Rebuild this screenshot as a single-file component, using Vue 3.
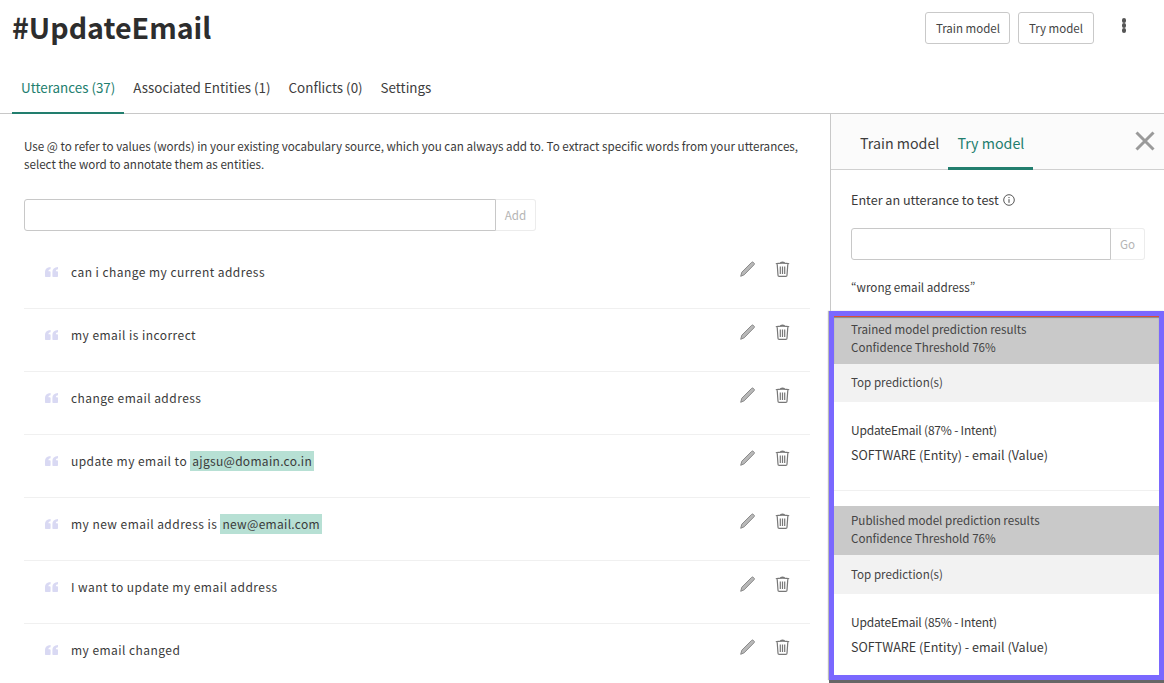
<script setup>
const tabs = [
  { label: 'Utterances (37)', active: true },
  { label: 'Associated Entities (1)' },
  { label: 'Conflicts (0)' },
  { label: 'Settings' }
]

const utterances = [
  { text: 'can i change my current address' },
  { text: 'my email is incorrect' },
  { text: 'change email address' },
  { text: 'update my email to ', entity: 'ajgsu@domain.co.in' },
  { text: 'my new email address is ', entity: 'new@email.com' },
  { text: 'I want to update my email address' },
  { text: 'my email changed' }
]

const results = [
  { title: 'Trained model prediction results', intent: 'UpdateEmail (87% - Intent)', trained: true },
  { title: 'Published model prediction results', intent: 'UpdateEmail (85% - Intent)' }
]
</script>

<template>
  <div class="page">
    <header class="top">
      <div class="title-row">
        <h1 class="title">#UpdateEmail</h1>
        <div class="actions">
          <button class="btn">Train model</button>
          <button class="btn">Try model</button>
          <span class="kebab"><i /><i /><i /></span>
        </div>
      </div>
      <nav class="tabs">
        <a v-for="t in tabs" :key="t.label" class="tab" :class="{ active: t.active }">{{ t.label }}</a>
      </nav>
    </header>

    <div class="body">
      <main class="left">
        <p class="help">
          Use @ to refer to values (words) in your existing vocabulary source, which you can always add to. To extract specific words from your utterances, select the word to annotate them as entities.
        </p>
        <div class="input-group add-group">
          <input class="field" type="text" />
          <span class="addon">Add</span>
        </div>
        <ul class="list">
          <li v-for="u in utterances" :key="u.text" class="row">
            <svg class="quote" viewBox="0 0 13 10" width="13" height="10">
              <path d="M0 9V5C0 2.200 1.800.4 5.600 0v2.300C4.200 2.500 3.500 3.100 3.400 4.200h1.200c.6 0 1 .4 1 1V9c0 .6-.4 1-1 1H1c-.6 0-1-.4-1-1zM7.400 9V5C7.400 2.200 9.200.4 13 0v2.300c-1.400.2-2.100.8-2.200 1.900H12c.6 0 1 .4 1 1V9c0 .6-.4 1-1 1H8.400c-.6 0-1-.4-1-1z" fill="#d9d9f3" />
            </svg>
            <span class="text">{{ u.text }}<span v-if="u.entity" class="entity">{{ u.entity }}</span></span>
            <svg class="pencil" viewBox="0 0 15 16" width="15" height="16">
              <path d="M.7 15.300l1.100-4.100 9.800-9.800c.6-.6 1.200-.6 1.800 0l.6.6c.6.6.6 1.200 0 1.800l-9.800 10z" fill="#b8b8b8" stroke="#808080" stroke-width=".9" stroke-linejoin="round" />
            </svg>
            <svg class="trash" viewBox="0 0 15 16" width="15" height="16">
              <path d="M.8 2.800C3 2 12 2 14.200 2.800M5.300 2.200C5.300.8 9.700.8 9.700 2.200M2.200 3.200l.8 11c0 .7.5 1.200 1.200 1.200h6.600c.7 0 1.200-.5 1.200-1.200l.8-11M5.300 5.500v7.500M7.500 5.500v7.500M9.700 5.500v7.500" fill="none" stroke="#777" stroke-width="1.200" />
            </svg>
          </li>
        </ul>
      </main>

      <aside class="panel">
        <div class="panel-tabs">
          <a class="panel-tab">Train model</a>
          <a class="panel-tab active">Try model</a>
          <svg class="close" viewBox="0 0 20 20" width="20" height="20">
            <path d="M1.500 1.500l17 17M18.500 1.500l-17 17" stroke="#9a9a9a" stroke-width="3" fill="none" />
          </svg>
        </div>
        <div class="test">
          <div class="test-label">
            Enter an utterance to test
            <svg viewBox="0 0 12 12" width="12" height="12">
              <circle cx="6" cy="6" r="5.300" fill="none" stroke="#444" stroke-width=".9" />
              <path d="M6 5.200v3.600M6 3v1.100" stroke="#444" stroke-width="1" fill="none" />
            </svg>
          </div>
          <div class="input-group go-group">
            <input class="field" type="text" />
            <span class="addon">Go</span>
          </div>
          <div class="said">“wrong email address”</div>
        </div>
        <div class="results">
          <section v-for="r in results" :key="r.title" class="result" :class="{ trained: r.trained }">
            <div class="result-head">
              <div>{{ r.title }}</div>
              <div>Confidence Threshold 76%</div>
            </div>
            <div class="result-sub">Top prediction(s)</div>
            <div class="result-body">
              <div class="intent-line">{{ r.intent }}</div>
              <div class="entity-line">SOFTWARE (Entity) - email (Value)</div>
            </div>
          </section>
        </div>
      </aside>
    </div>
  </div>
</template>

<style>
html, body {
  margin: 0;
  background: #fff;
}
</style>

<style scoped>
.page {
  width: 1164px;
  height: 683px;
  overflow: hidden;
  display: flex;
  flex-direction: column;
  font-family: "Noto Sans CJK SC", "Noto Sans", sans-serif;
  color: #3a3a3a;
  font-size: 13px;
  font-variant-east-asian: proportional-width;
}

.top {
  height: 114px;
  flex-shrink: 0;
  box-sizing: border-box;
  border-bottom: 1px solid #c8c8c8;
  display: flex;
  flex-direction: column;
  justify-content: space-between;
}
.title-row {
  display: flex;
  justify-content: space-between;
  padding: 10px 38px 0 12px;
}
.title {
  margin: 0;
  font-size: 28.600px;
  line-height: 34px;
  font-weight: 700;
  color: #2d2d2d;
}
.actions {
  display: flex;
  align-items: flex-start;
  gap: 8px;
  padding-top: 2px;
}
.btn {
  height: 32px;
  padding: 0 9.500px;
  font: inherit;
  font-size: 11.500px;
  color: #444;
  background: #fff;
  border: 1px solid #c9c9c9;
  border-radius: 3px;
}
.kebab {
  margin: 6px 0 0 20px;
  display: flex;
  flex-direction: column;
  gap: .5px;
}
.kebab i {
  width: 4.500px;
  height: 4.500px;
  border-radius: 50%;
  background: #555;
}

.tabs {
  display: flex;
  padding-left: 12px;
}
.tab {
  padding: 0 9px 14px;
  font-size: 13.400px;
  line-height: 22px;
  color: #3d3d3d;
  border-bottom: 2px solid transparent;
  margin-bottom: -1px;
}
.tab.active {
  color: #227e6e;
  border-bottom-color: #227e6e;
}

.body {
  flex: 1;
  display: flex;
  min-height: 0;
}

.left {
  width: 830px;
  flex-shrink: 0;
  box-sizing: border-box;
  padding: 23px 20px 0 24px;
}
.help {
  margin: 0 0 26px;
  font-size: 11.630px;
  line-height: 18px;
  color: #3a3a3a;
}
.input-group {
  display: flex;
  box-sizing: border-box;
  height: 32px;
}
.add-group {
  width: 512px;
}
.field {
  flex: 1;
  min-width: 0;
  box-sizing: border-box;
  border: 1px solid #c8c8c8;
  border-radius: 3px 0 0 3px;
  outline: none;
  background: #fff;
}
.addon {
  width: 40px;
  box-sizing: border-box;
  display: flex;
  align-items: center;
  justify-content: center;
  border: 1px solid #ececec;
  border-left: none;
  border-radius: 0 3px 3px 0;
  color: #b5b5b5;
  font-size: 11.600px;
}
.go-group .addon {
  width: 34px;
}

.list {
  list-style: none;
  margin: 15px 0 0;
  padding: 0;
}
.row {
  height: 63px;
  box-sizing: border-box;
  display: flex;
  align-items: center;
  padding: 0 20px 11px 21px;
  border-bottom: 1px solid #f0f0f0;
}
.quote {
  flex-shrink: 0;
  margin-right: 13px;
}
.text {
  flex: 1;
  font-size: 12px;
  letter-spacing: .45px;
  color: #3a3a3a;
}
.entity {
  display: inline-block;
  background: #b7e0d4;
  padding: 0 2px;
  line-height: 20px;
  letter-spacing: .3px;
}
.pencil {
  margin: -5px 20px 0 0;
}
.trash {
  margin-top: -5px;
}

.panel {
  flex: 1;
  min-width: 0;
  display: flex;
  flex-direction: column;
  border-left: 1px solid #c8c8c8;
  box-sizing: border-box;
}
.panel-tabs {
  height: 56px;
  flex-shrink: 0;
  box-sizing: border-box;
  position: relative;
  display: flex;
  align-items: flex-end;
  padding-left: 20px;
  background: #fbfbfb;
  border-bottom: 1px solid #d0d0d0;
}
.panel-tab {
  font-size: 14.250px;
  line-height: 22px;
  color: #3d3d3d;
  padding: 0 9px 13px;
  margin-bottom: -1px;
  border-bottom: 3px solid transparent;
}
.panel-tab.active {
  color: #227e6e;
  border-bottom-color: #227e6e;
}
.close {
  position: absolute;
  right: 9px;
  top: 17px;
}
.test {
  height: 141px;
  flex-shrink: 0;
  box-sizing: border-box;
  padding: 19px 19px 0 20px;
  font-size: 12.600px;
}
.test-label {
  display: flex;
  align-items: center;
  gap: 4px;
  line-height: 21px;
  margin-bottom: 18px;
}
.said {
  margin-top: 18px;
  font-size: 11.700px;
  line-height: 18px;
}

.results {
  margin-left: -2px;
  box-sizing: border-box;
  height: 369px;
  flex: none;
  border: 5px solid #7a68ff;
  box-shadow: 0 3px 0 #666, -1px 0 1px #bbb;
  background: #fff;
  overflow: hidden;
}
.result-head {
  height: 49px;
  box-sizing: border-box;
  padding: 5px 17px 0;
  background: #c9c9c9;
  font-size: 11.600px;
  line-height: 18px;
  color: #444;
}
.trained .result-head {
  height: 48px;
  padding-top: 3px;
  border-top: 1px solid #d9503a;
  box-shadow: inset 0 1px 1px #888;
}
.result-sub {
  height: 39px;
  box-sizing: border-box;
  padding: 0 17px 2px;
  display: flex;
  align-items: center;
  background: #f2f2f2;
  font-size: 11.600px;
  color: #444;
}
.trained .result-sub {
  height: 38px;
}
.result-body {
  padding: 18px 17px 0;
  line-height: 20px;
  color: #3a3a3a;
}
.trained .result-body {
  height: 89px;
  box-sizing: border-box;
  border-bottom: 1px solid #f0f0f0;
  margin-bottom: 15px;
}
.intent-line {
  font-size: 12px;
  letter-spacing: -.2px;
}
.entity-line {
  margin-top: 5px;
  font-size: 12.550px;
}
</style>
